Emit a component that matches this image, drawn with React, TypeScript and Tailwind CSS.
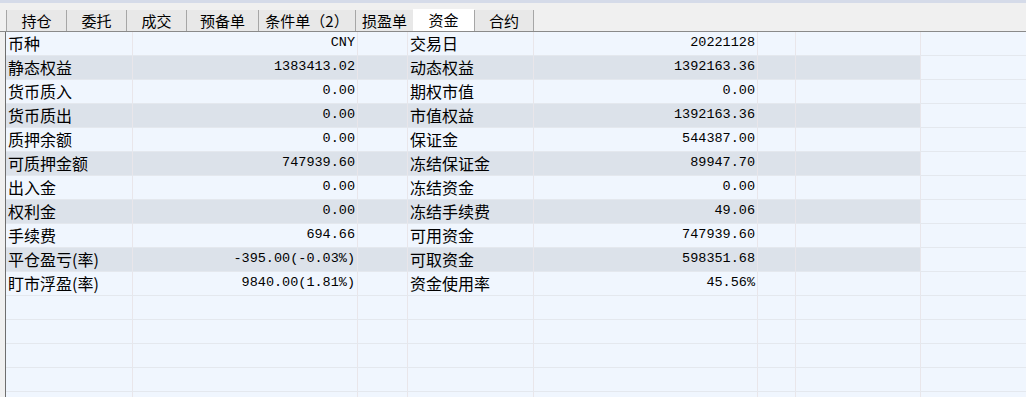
const tabs = [
  { label: "持仓", w: "w-[60px]" },
  { label: "委托", w: "w-[60px]" },
  { label: "成交", w: "w-[60px]" },
  { label: "预备单", w: "w-[72px]" },
  { label: "条件单（2）", w: "w-[97px]" },
  { label: "损盈单", w: "w-[58px]" },
  { label: "资金", w: "w-[61px]", active: true },
  { label: "合约", w: "w-[60px]" },
];

const rows: [string, string, string, string][] = [
  ["币种", "CNY", "交易日", "20221128"],
  ["静态权益", "1383413.02", "动态权益", "1392163.36"],
  ["货币质入", "0.00", "期权市值", "0.00"],
  ["货币质出", "0.00", "市值权益", "1392163.36"],
  ["质押余额", "0.00", "保证金", "544387.00"],
  ["可质押金额", "747939.60", "冻结保证金", "89947.70"],
  ["出入金", "0.00", "冻结资金", "0.00"],
  ["权利金", "0.00", "冻结手续费", "49.06"],
  ["手续费", "694.66", "可用资金", "747939.60"],
  ["平仓盈亏(率)", "-395.00(-0.03%)", "可取资金", "598351.68"],
  ["盯市浮盈(率)", "9840.00(1.81%)", "资金使用率", "45.56%"],
];

const cjk = "font-['Noto_Sans_CJK_SC',sans-serif]";
const mono = "font-['Liberation_Mono','Noto_Sans_CJK_SC',monospace]";

function Row({ cells, striped }: { cells?: [string, string, string, string]; striped?: boolean }) {
  const bg = striped ? "bg-[#dce2ea]" : "bg-[#f0f6fe]";
  const cell = `h-full shrink-0 border-r border-[#e9e6ea] ${bg}`;
  return (
    <div className="flex h-[24px] border-b border-[#e4e8ee] bg-[#f0f6fe]">
      <div className={`${cell} w-[127px] pl-[2px] pb-[2px] flex items-center text-[16px] leading-[20px] ${cjk}`}>{cells?.[0]}</div>
      <div className={`${cell} w-[225px] pr-[2px] pb-[1px] flex items-center justify-end text-[13.5px] leading-[18px] ${mono}`}>{cells?.[1]}</div>
      <div className={`${cell} w-[50px]`} />
      <div className={`${cell} w-[126px] pl-[2px] pb-[2px] flex items-center text-[16px] leading-[20px] ${cjk}`}>{cells?.[2]}</div>
      <div className={`${cell} w-[224px] pr-[2px] pb-[1px] flex items-center justify-end text-[13.5px] leading-[18px] ${mono}`}>{cells?.[3]}</div>
      <div className={`${cell} w-[38px]`} />
      <div className={`${cell} w-[125px]`} />
      <div className="flex-1" />
    </div>
  );
}

export default function App() {
  return (
    <div className="w-[1026px] h-[397px] overflow-hidden bg-[#f0f0f0] flex flex-col text-black">
      {/* top strip */}
      <div className="h-[3px] bg-[#d5dbe9]" />

      {/* tabs */}
      <div className="h-[29px] flex items-end pl-[6px] border-b border-[#8a8a8a]">
        {tabs.map((t, i) => (
          <div
            key={i}
            className={`${t.w} flex items-center justify-center text-[15px] leading-[20px] ${cjk} ${
              t.active
                ? "h-[22px] bg-white"
                : "h-[21px] bg-[#e8e8e8] border-l border-[#a6a6a6]"
            } ${i === tabs.length - 1 ? "border-r" : ""}`}
          >
            {t.label}
          </div>
        ))}
      </div>

      {/* table */}
      <div className="flex-1 ml-[5px] border-l border-[#6e6e6e] bg-[#f0f6fe] overflow-hidden">
        {rows.map((r, i) => (
          <Row key={i} cells={r} striped={i % 2 === 1} />
        ))}
        {[0, 1, 2, 3, 4].map((i) => (
          <Row key={"e" + i} />
        ))}
      </div>
    </div>
  );
}
